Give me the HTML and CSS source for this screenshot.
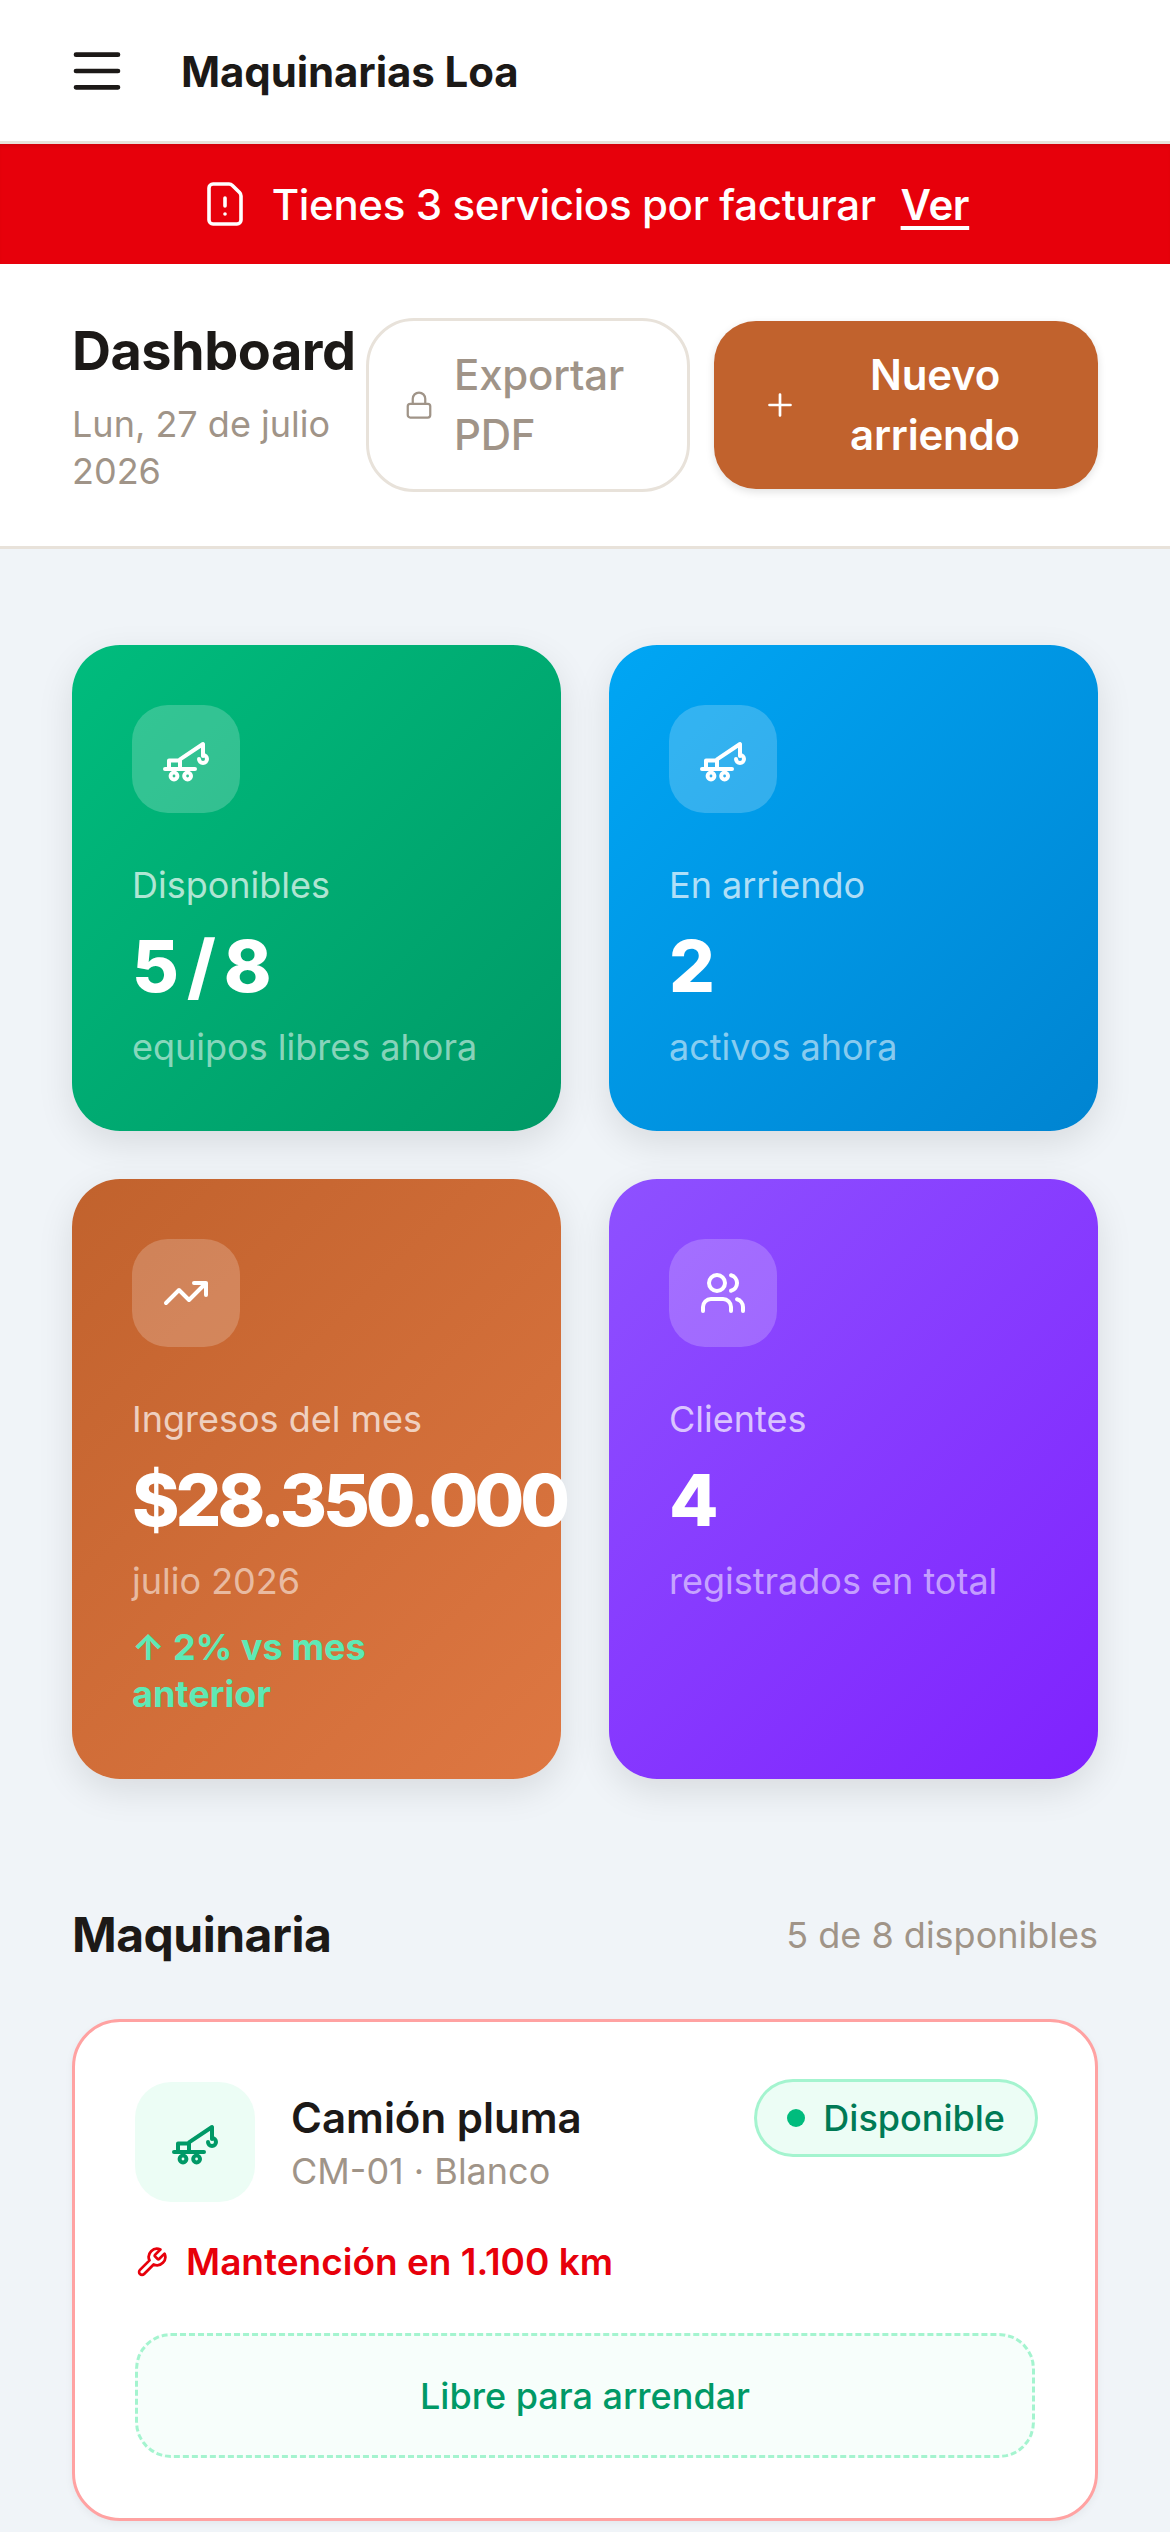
FILE: index.html
```html
<!DOCTYPE html>
<html lang="es">
	<head>
		<meta charset="utf-8">
		<title>Maquinarias Loa</title>
		<link rel="stylesheet" href="styles.css">
	</head>
	<body>
		<svg class="defs" width="0" height="0">
			<symbol id="crane" viewBox="0 0 24 24">
				<path d="M1.500 17h15M3.500 17v-4.300h5.500V17M9 12.200 20.500 4.500v6"/>
				<path d="M20.500 10a2 2 0 1 1-2 2"/>
				<circle cx="6" cy="20.500" r="1.700"/>
				<circle cx="12.800" cy="20.500" r="1.700"/>
			</symbol>
		</svg>

		<header class="topbar">
			<svg class="menu-icon" viewBox="0 0 24 24"><path d="M3 5h18M3 12h18M3 19h18"/></svg>
			<span class="brand">Maquinarias Loa</span>
		</header>

		<div class="alert">
			<svg class="alert-icon" viewBox="0 0 24 24">
				<path d="M6 22a2 2 0 0 1-2-2V4a2 2 0 0 1 2-2h8a2.400 2.400 0 0 1 1.704.706l3.588 3.588A2.400 2.400 0 0 1 20 8v12a2 2 0 0 1-2 2z"/>
				<path d="M12 9v4M12 17h.01"/>
			</svg>
			<span class="alert-text">Tienes 3 servicios por facturar</span>
			<a href="#" class="alert-link">Ver</a>
		</div>

		<section class="page-head">
			<div class="page-title">
				<h1>Dashboard</h1>
				<p>Lun, 27 de julio 2026</p>
			</div>
			<div class="page-actions">
				<a href="#" class="btn btn-export">
					<svg class="lock-icon" viewBox="0 0 24 24">
						<rect x="3" y="11" width="18" height="11" rx="2"/>
						<path d="M7 11V7a5 5 0 0 1 10 0v4"/>
					</svg>
					<span>Exportar PDF</span>
				</a>
				<a href="#" class="btn btn-new">
					<svg class="plus-icon" viewBox="0 0 24 24"><path d="M5 12h14M12 5v14"/></svg>
					<span>Nuevo arriendo</span>
				</a>
			</div>
		</section>

		<main class="content">
			<div class="stats">
				<div class="stat stat-green">
					<div class="stat-icon"><svg class="icon"><use href="#crane"/></svg></div>
					<p class="stat-label">Disponibles</p>
					<p class="stat-value">5<span class="slash">/</span>8</p>
					<p class="stat-sub">equipos libres ahora</p>
				</div>
				<div class="stat stat-blue">
					<div class="stat-icon"><svg class="icon"><use href="#crane"/></svg></div>
					<p class="stat-label">En arriendo</p>
					<p class="stat-value">2</p>
					<p class="stat-sub">activos ahora</p>
				</div>
				<div class="stat stat-orange">
					<div class="stat-icon">
						<svg class="icon" viewBox="0 0 24 24"><path d="M22 7l-8.500 8.500-5-5L2 17M16 7h6v6"/></svg>
					</div>
					<p class="stat-label">Ingresos del mes</p>
					<p class="stat-value">$28.350.000</p>
					<p class="stat-sub">julio 2026</p>
					<p class="stat-trend">↑ 2% vs mes anterior</p>
				</div>
				<div class="stat stat-violet">
					<div class="stat-icon">
						<svg class="icon" viewBox="0 0 24 24">
							<path d="M16 21v-2a4 4 0 0 0-4-4H6a4 4 0 0 0-4 4v2"/>
							<circle cx="9" cy="7" r="4"/>
							<path d="M22 21v-2a4 4 0 0 0-3-3.870M16 3.130a4 4 0 0 1 0 7.750"/>
						</svg>
					</div>
					<p class="stat-label">Clientes</p>
					<p class="stat-value">4</p>
					<p class="stat-sub">registrados en total</p>
				</div>
			</div>

			<div class="section-head">
				<h2>Maquinaria</h2>
				<span>5 de 8 disponibles</span>
			</div>

			<article class="machine">
				<div class="machine-top">
					<div class="machine-icon"><svg class="icon"><use href="#crane"/></svg></div>
					<div class="machine-info">
						<h3>Camión pluma</h3>
						<p>CM-01 · Blanco</p>
					</div>
					<span class="pill"><i class="dot"></i>Disponible</span>
				</div>
				<p class="machine-warn">
					<svg class="wrench-icon" viewBox="0 0 24 24">
						<path d="M14.700 6.300a1 1 0 0 0 0 1.400l1.600 1.600a1 1 0 0 0 1.400 0l3.770-3.770a6 6 0 0 1-7.940 7.940l-6.910 6.910a2.120 2.120 0 0 1-3-3l6.910-6.910a6 6 0 0 1 7.940-7.940l-3.760 3.760z"/>
					</svg>
					Mantención en 1.100 km
				</p>
				<div class="machine-free">Libre para arrendar</div>
			</article>
		</main>
	</body>
</html>
```

FILE: styles.css
```css
*{margin:0;padding:0;box-sizing:border-box;}
html,body{height:2532px;overflow:hidden;}
body{background:#f0f4f8;font-family:"Inter","Liberation Sans",sans-serif;color:#1c1917;}
a{text-decoration:none;}
svg{fill:none;stroke:currentColor;stroke-width:2;stroke-linecap:round;stroke-linejoin:round;flex:none;}
.defs{position:absolute;}
.icon{width:48px;height:48px;}

.topbar{height:144px;background:#fff;border-bottom:3px solid #e8e2da;display:flex;align-items:center;padding:0 0 0 69px;gap:56px;}
.menu-icon{width:56px;height:56px;color:#1c1917;}
.brand{font-size:42px;font-weight:700;letter-spacing:-.1px;margin-top:2px;}

.alert{height:120px;background:#e7000b;color:#fff;display:flex;align-items:center;justify-content:center;font-size:42px;font-weight:500;letter-spacing:-.35px;box-shadow:inset 0 4px 4px -2px rgba(0,0,0,.1);}
.alert-icon{width:48px;height:48px;margin-right:23px;stroke-width:1.800;}
.alert-link{color:#fff;font-weight:600;text-decoration:underline;text-underline-offset:6px;margin-left:25px;}

.page-head{height:285px;background:#fff;border-bottom:3px solid #e8e2da;padding:0 72px;display:flex;align-items:center;justify-content:space-between;}
.page-title{width:282px;flex:none;}
.page-title h1{font-size:54px;font-weight:700;line-height:72px;letter-spacing:-.5px;white-space:nowrap;}
.page-title p{font-size:36px;line-height:47px;color:#a09488;margin-top:14px;}
.page-actions{display:flex;align-items:center;gap:24px;}
.btn{display:flex;align-items:center;font-size:42px;line-height:60px;font-weight:500;}
.btn-export{width:324px;height:174px;border:3px solid #e8e2da;border-radius:48px;background:#fff;color:#a09488;padding-left:35px;gap:20px;letter-spacing:-.2px;}
.lock-icon{width:30px;height:30px;stroke-width:1.800;}
.btn-new{width:384px;height:168px;border-radius:42px;background:#c1622d;color:#fff;font-weight:600;letter-spacing:-.2px;padding:0 62px 0 48px;gap:36px;text-align:center;box-shadow:0 3px 9px rgba(0,0,0,.12);}
.plus-icon{width:36px;height:36px;stroke-width:1.800;}

.content{padding:96px 72px 0;}
.stats{display:grid;grid-template-columns:repeat(2,minmax(0,1fr));gap:48px;}
.stat{border-radius:48px;padding:60px 60px 57px;color:#fff;box-shadow:0 12px 36px rgba(0,0,0,.1);}
.stat-green{background:linear-gradient(135deg,#00bc7d,#009966);}
.stat-blue{background:linear-gradient(135deg,#00a6f4,#0084d1);}
.stat-orange{background:linear-gradient(135deg,#c1622d,#de7742);}
.stat-violet{background:linear-gradient(135deg,#8e51ff,#7f22fe);}
.stat-icon{width:108px;height:108px;border-radius:36px;background:rgba(255,255,255,.2);display:flex;align-items:center;justify-content:center;margin-bottom:45px;}
.stat-label{font-size:36px;line-height:54px;color:rgba(255,255,255,.7);}
.stat-value{font-size:72px;line-height:90px;font-weight:800;white-space:nowrap;letter-spacing:-4px;margin:9px 0;}
.slash{margin:0 12px;}
.stat-sub{font-size:36px;line-height:54px;color:rgba(255,255,255,.55);}
.stat-trend{font-size:36px;line-height:47px;font-weight:700;color:#5ee9b5;margin:16px 0 4px;}

.section-head{display:flex;align-items:center;justify-content:space-between;margin-top:120px;}
.section-head h2{font-size:48px;line-height:72px;font-weight:700;letter-spacing:-.5px;}
.section-head span{font-size:36px;color:#a09488;}

.machine{margin-top:48px;background:#fff;border:3px solid #ffa2a2;border-radius:48px;padding:60px;box-shadow:0 3px 9px rgba(0,0,0,.05);}
.machine-top{display:flex;align-items:flex-start;gap:36px;}
.machine-icon{width:120px;height:120px;border-radius:36px;background:#ecfdf5;color:#009966;display:flex;align-items:center;justify-content:center;flex:none;}
.machine-info{flex:1;padding-top:9px;}
.machine-info h3{font-size:42px;line-height:54px;font-weight:600;}
.machine-info p{font-size:36px;line-height:52px;color:#a09488;}
.pill{display:flex;align-items:center;gap:18px;height:72px;padding:0 30px;border-radius:36px;background:#ecfdf5;box-shadow:0 0 0 3px #a4f4cf;color:#007a55;font-size:36px;font-weight:500;}
.dot{width:18px;height:18px;border-radius:50%;background:#00bc7d;}
.machine-warn{display:flex;align-items:center;gap:18px;margin-top:36px;font-size:37px;line-height:48px;font-weight:600;color:#e7000b;}
.wrench-icon{width:33px;height:33px;}
.machine-free{margin-top:47px;height:125px;border:3px dashed #a4f4cf;border-radius:36px;background:#f7fefb;color:#009966;font-size:36px;font-weight:500;display:flex;align-items:center;justify-content:center;}
```
